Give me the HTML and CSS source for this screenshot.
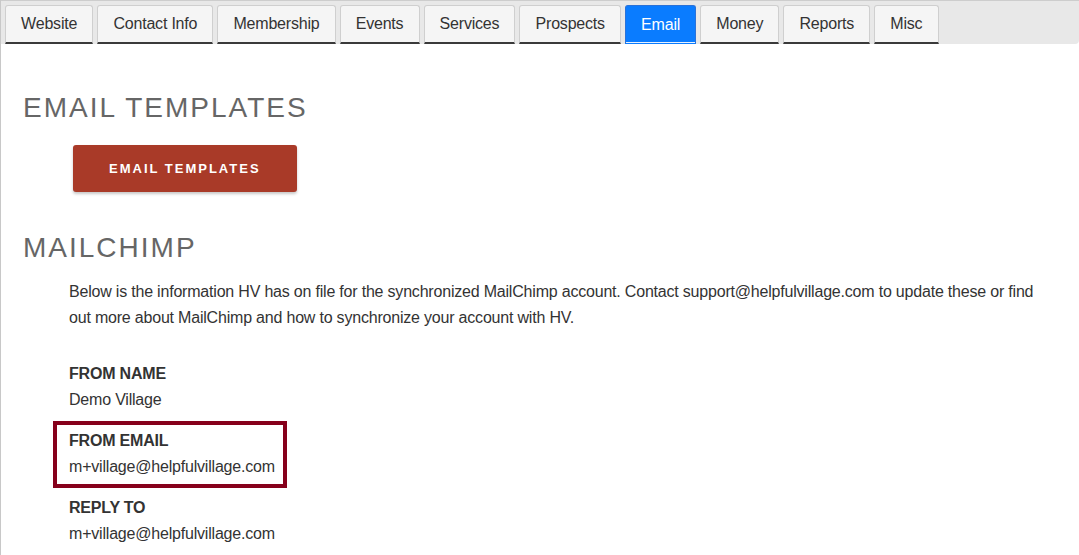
FILE: index.html
```html
<!DOCTYPE html>
<html lang="en">
<head>
    <meta charset="UTF-8">
    <meta name="viewport" content="width=device-width, initial-scale=1.0">
    <title>Email - Helpful Village</title>
    <link rel="stylesheet" href="styles.css">
</head>
<body>
    <div class="page">
        <nav class="tab-bar">
            <a class="tab" href="#">Website</a>
            <a class="tab" href="#">Contact Info</a>
            <a class="tab" href="#">Membership</a>
            <a class="tab" href="#">Events</a>
            <a class="tab" href="#">Services</a>
            <a class="tab" href="#">Prospects</a>
            <a class="tab active" href="#">Email</a>
            <a class="tab" href="#">Money</a>
            <a class="tab" href="#">Reports</a>
            <a class="tab" href="#">Misc</a>
        </nav>

        <div class="content">
            <h2 class="section-title">Email Templates</h2>
            <a class="action-button" href="#">Email Templates</a>

            <h2 class="section-title mailchimp-title">MailChimp</h2>
            <p class="intro">
                Below is the information HV has on file for the synchronized MailChimp account. Contact support@helpfulvillage.com to update these or find out more about MailChimp and how to synchronize your account with HV.
            </p>

            <div class="fields">
                <div class="field">
                    <div class="field-label">FROM NAME</div>
                    <div class="field-value">Demo Village</div>
                </div>
                <div class="field highlighted">
                    <div class="field-label">FROM EMAIL</div>
                    <div class="field-value">m+village@helpfulvillage.com</div>
                </div>
                <div class="field">
                    <div class="field-label">REPLY TO</div>
                    <div class="field-value">m+village@helpfulvillage.com</div>
                </div>
            </div>
        </div>
    </div>
</body>
</html>
```

FILE: styles.css
```css
body {
    margin: 0;
    font-family: "Liberation Sans", Arial, sans-serif;
    font-size: 16px;
    letter-spacing: -0.2px;
    color: #333;
    background-color: #fff;
}

.page {
    min-height: 100vh;
    border-left: 1px solid #c8c8c8;
}

/* Top navigation tabs */
.tab-bar {
    display: flex;
    gap: 4px;
    padding: 4px 4px 0;
    background-color: #e8e8e8;
    border-top: 1px solid #cdcdcd;
    border-bottom-right-radius: 4px;
}

.tab {
    display: block;
    padding: 0 15.1px;
    line-height: 36px;
    background-color: #f5f5f5;
    border: 1px solid #cfcfcf;
    border-bottom: 2px solid #3a3a3a;
    border-radius: 3px 3px 0 0;
    color: #333;
    text-decoration: none;
}

.tab.active {
    background-color: #0a7cff;
    border-color: #2a72d8;
    border-bottom: 1px solid #0a7cff;
    line-height: 37px;
    color: #fff;
    box-shadow: inset 0 -1px 0 #e8f1ff;
}

/* Main content */
.content {
    padding: 0 30px 0 22px;
}

.section-title {
    margin: 47px 0 0;
    font-size: 28px;
    line-height: 34px;
    font-weight: normal;
    letter-spacing: 2px;
    text-transform: uppercase;
    color: #666;
}

.mailchimp-title {
    margin-top: 39px;
}

.action-button {
    display: inline-block;
    margin: 20px 0 0 50px;
    padding: 0 36px;
    line-height: 47px;
    background-color: #a93a28;
    color: #fff;
    font-size: 13px;
    font-weight: bold;
    letter-spacing: 2px;
    text-transform: uppercase;
    text-decoration: none;
    border-radius: 3px;
    box-shadow: 0 2px 3px rgba(0, 0, 0, 0.22);
}

.intro {
    margin: 14px 0 0 46px;
    line-height: 26px;
}

.fields {
    margin: 23px 0 0 30px;
    display: flex;
    flex-direction: column;
    align-items: flex-start;
}

.field {
    padding: 3px 8px 4px 12px;
    border: 4px solid transparent;
    line-height: 26px;
}

.field.highlighted {
    border-color: #86001b;
}

.field-label {
    font-weight: bold;
}
```
